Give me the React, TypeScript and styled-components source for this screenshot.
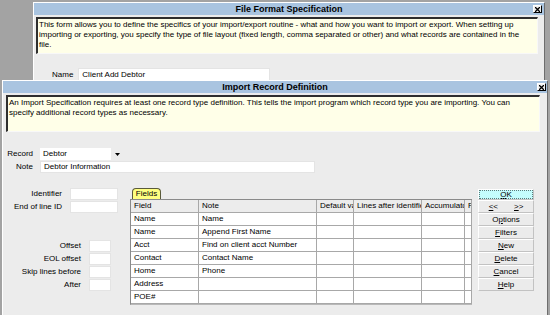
import React from "react";
import styled, { createGlobalStyle } from "styled-components";

const Global = createGlobalStyle`
  html, body { margin: 0; padding: 0; background: #a3a3a3; }
  body {
    width: 550px; height: 315px; overflow: hidden;
    font-family: "Liberation Sans", Arial, sans-serif;
    font-size: 8px; color: #000;
  }
  * { box-sizing: border-box; }
`;

const Desktop = styled.div`
  position: relative;
  width: 550px;
  height: 315px;
  background: #a3a3a3;
  overflow: hidden;
`;

const Window = styled.div<{ $left: number; $top: number; $width: number; $height: number }>`
  position: absolute;
  left: ${(p) => p.$left}px;
  top: ${(p) => p.$top}px;
  width: ${(p) => p.$width}px;
  height: ${(p) => p.$height}px;
  background: #ececec;
  border-top: 1px solid #ffffff;
  border-left: 1px solid #ffffff;
  border-right: 1px solid #6e6e6e;
  border-bottom: 1px solid #6e6e6e;
  display: flex;
  flex-direction: column;
`;

const TitleBar = styled.div`
  position: relative;
  height: 12px;
  flex: none;
  background: #a9c4e0;
  display: flex;
  align-items: center;
  justify-content: center;
  font-weight: bold;
  font-size: 9px;
  line-height: 12px;
`;

const CloseBox = styled.span<{ $right: number }>`
  position: absolute;
  right: ${(p) => p.$right}px;
  top: 2px;
  width: 9px;
  height: 8px;
  background: #f0f0f0;
  border-top: 1px solid #ffffff;
  border-left: 1px solid #ffffff;
  border-right: 1px solid #000;
  border-bottom: 1px solid #000;
  display: flex;
  align-items: center;
  justify-content: center;
`;

const DescBox = styled.div<{ $ml: number; $mr: number }>`
  flex: none;
  margin: 2px ${(p) => p.$mr}px 0 ${(p) => p.$ml}px;
  height: 37px;
  background: #ffffe8;
  border-top: 2px solid #2e2e2e;
  border-left: 2px solid #2e2e2e;
  border-right: 1px solid #f8f8f8;
  border-bottom: 1px solid #f8f8f8;
  padding: 1px 3px 0 1px;
  line-height: 10px;
  font-size: 8px;
  white-space: nowrap;
  overflow: hidden;
`;

const NameRow = styled.div`
  display: flex;
  align-items: center;
  margin: 14px 0 0 18px;
  gap: 5px;
`;

const Label = styled.span<{ $w?: number }>`
  display: inline-block;
  width: ${(p) => (p.$w ? `${p.$w}px` : "auto")};
  text-align: right;
  white-space: nowrap;
  font-size: 8px;
  line-height: 12px;
`;

const TextInput = styled.div<{ $w: number; $h?: number }>`
  width: ${(p) => p.$w}px;
  height: ${(p) => p.$h ?? 12}px;
  background: #ffffff;
  border: 1px solid #e4e4e4;
  padding: 0 3px;
  line-height: ${(p) => (p.$h ?? 12) - 2}px;
  font-size: 8px;
  white-space: nowrap;
  overflow: hidden;
`;

const FormRows = styled.div`
  display: flex;
  flex-direction: column;
  gap: 1px;
  margin: 16px 0 0 0;
`;

const FormRow = styled.div`
  display: flex;
  align-items: center;
  gap: 7px;
`;

const Combo = styled.div`
  display: flex;
  height: 12px;
`;

const ComboField = styled.div`
  width: 71px;
  background: #fff;
  padding: 0 3px;
  line-height: 12px;
  font-size: 8px;
`;

const ComboButton = styled.div`
  width: 12px;
  background: #ececec;
  display: flex;
  align-items: center;
  justify-content: center;
`;

const Lower = styled.div`
  display: flex;
  align-items: flex-start;
  margin-top: 14px;
`;

const LeftPanel = styled.div`
  width: 127px;
  flex: none;
  display: flex;
  flex-direction: column;
`;

const FieldGroup = styled.div<{ $labelW: number; $mt: number }>`
  display: grid;
  grid-template-columns: ${(p) => p.$labelW}px auto;
  grid-auto-rows: 13px;
  column-gap: 8px;
  align-items: start;
  margin-top: ${(p) => p.$mt}px;
`;

const GridPanel = styled.div`
  width: 342px;
  flex: none;
  display: flex;
  flex-direction: column;
`;

const Tab = styled.div`
  align-self: flex-start;
  margin: 1px 0 0 2px;
  width: 29px;
  height: 11px;
  background: #ffff80;
  border: 1px solid #5a5a3a;
  border-bottom: none;
  border-radius: 4px 4px 0 0;
  font-size: 8px;
  line-height: 10px;
  text-align: center;
`;

const Table = styled.div`
  display: grid;
  grid-template-columns: 68px 118px 37px 68px 43px 7px;
  grid-auto-rows: 13px;
  border-top: 1px solid #8a8a8a;
  border-left: 1px solid #8a8a8a;
  border-bottom: 1px solid #b8b8b8;
  background: #fff;
`;

const Cell = styled.div<{ $head?: boolean }>`
  background: ${(p) => (p.$head ? "#ececec" : "#ffffff")};
  border-right: 1px solid #a8a8a8;
  border-bottom: 1px solid #a8a8a8;
  padding: 0 3px;
  line-height: 12px;
  font-size: 8px;
  white-space: nowrap;
  overflow: hidden;
`;

const Buttons = styled.div`
  width: 56px;
  margin: 2px 0 0 6px;
  display: flex;
  flex-direction: column;
`;

const Btn = styled.div<{ $primary?: boolean; $h?: number }>`
  height: ${(p) => p.$h ?? 13}px;
  background: ${(p) => (p.$primary ? "#c4fdfd" : "#ebebeb")};
  border: 1px solid;
  border-color: #ffffff #c2c2c2 #c2c2c2 #ffffff;
  outline: ${(p) => (p.$primary ? "1px dotted #5a7a7a" : "none")};
  outline-offset: -2px;
  display: flex;
  align-items: center;
  justify-content: center;
  font-size: 8px;
  line-height: 11px;
  gap: 16px;
  u { text-decoration: underline; text-underline-offset: 1px; }
`;

const Close = ({ right }: { right: number }) => (
  <CloseBox $right={right}>
    <svg width="5" height="5" viewBox="0 0 5 5">
      <path d="M0 0L5 5M5 0L0 5" stroke="#000" strokeWidth="1.3" />
    </svg>
  </CloseBox>
);

const columns = ["Field", "Note", "Default value", "Lines after identifier", "Accumulator", "Format"];
const rows: [string, string][] = [
  ["Name", "Name"],
  ["Name", "Append First Name"],
  ["Acct", "Find on client acct Number"],
  ["Contact", "Contact Name"],
  ["Home", "Phone"],
  ["Address", ""],
  ["POE#", ""],
];

export default function App() {
  return (
    <Desktop>
      <Global />
      <Window $left={33} $top={2} $width={512} $height={100}>
        <TitleBar>
          File Format Specification
          <Close right={2} />
        </TitleBar>
        <DescBox $ml={2} $mr={6}>
          This form allows you to define the specifics of your import/export routine - what and how you want to import or export. When setting up
          <br />
          importing or exporting, you specify the type of file layout (fixed length, comma separated or other) and what records are contained in the
          <br />
          file.
        </DescBox>
        <NameRow>
          <Label>Name</Label>
          <TextInput $w={192} $h={13}>Client Add Debtor</TextInput>
        </NameRow>
      </Window>

      <Window $left={2} $top={80} $width={546} $height={240}>
        <TitleBar>
          Import Record Definition
          <Close right={1} />
        </TitleBar>
        <DescBox $ml={3} $mr={7}>
          An Import Specification requires at least one record type definition. This tells the import program which record type you are importing. You can
          <br />
          specify additional record types as necessary.
        </DescBox>
        <FormRows>
          <FormRow>
            <Label $w={30}>Record</Label>
            <Combo>
              <ComboField>Debtor</ComboField>
              <ComboButton>
                <svg width="5" height="3" viewBox="0 0 5 3">
                  <path d="M0 0H5L2.5 3Z" fill="#000" />
                </svg>
              </ComboButton>
            </Combo>
          </FormRow>
          <FormRow>
            <Label $w={30}>Note</Label>
            <TextInput $w={275}>Debtor Information</TextInput>
          </FormRow>
        </FormRows>
        <Lower>
          <LeftPanel>
            <FieldGroup $labelW={59} $mt={1}>
              <Label>Identifier</Label>
              <TextInput $w={48} />
              <Label>End of line ID</Label>
              <TextInput $w={48} />
            </FieldGroup>
            <FieldGroup $labelW={78} $mt={26}>
              <Label>Offset</Label>
              <TextInput $w={22} />
              <Label>EOL offset</Label>
              <TextInput $w={22} />
              <Label>Skip lines before</Label>
              <TextInput $w={22} />
              <Label>After</Label>
              <TextInput $w={22} />
            </FieldGroup>
          </LeftPanel>
          <GridPanel>
            <Tab>Fields</Tab>
            <Table>
              {columns.map((c) => (
                <Cell key={c} $head>
                  {c}
                </Cell>
              ))}
              {rows.map(([f, n], i) => (
                <React.Fragment key={i}>
                  <Cell>{f}</Cell>
                  <Cell>{n}</Cell>
                  <Cell />
                  <Cell />
                  <Cell />
                  <Cell />
                </React.Fragment>
              ))}
            </Table>
          </GridPanel>
          <Buttons>
            <Btn $primary $h={11}>
              <span>
                <u>O</u>K
              </span>
            </Btn>
            <Btn>
              <span>
                <u>&lt;</u>&lt;
              </span>
              <span>
                <u>&gt;</u>&gt;
              </span>
            </Btn>
            <Btn>
              <span>
                O<u>p</u>tions
              </span>
            </Btn>
            <Btn>
              <span>
                <u>F</u>ilters
              </span>
            </Btn>
            <Btn>
              <span>
                <u>N</u>ew
              </span>
            </Btn>
            <Btn>
              <span>
                <u>D</u>elete
              </span>
            </Btn>
            <Btn>
              <span>
                <u>C</u>ancel
              </span>
            </Btn>
            <Btn>
              <span>
                <u>H</u>elp
              </span>
            </Btn>
          </Buttons>
        </Lower>
      </Window>
    </Desktop>
  );
}
